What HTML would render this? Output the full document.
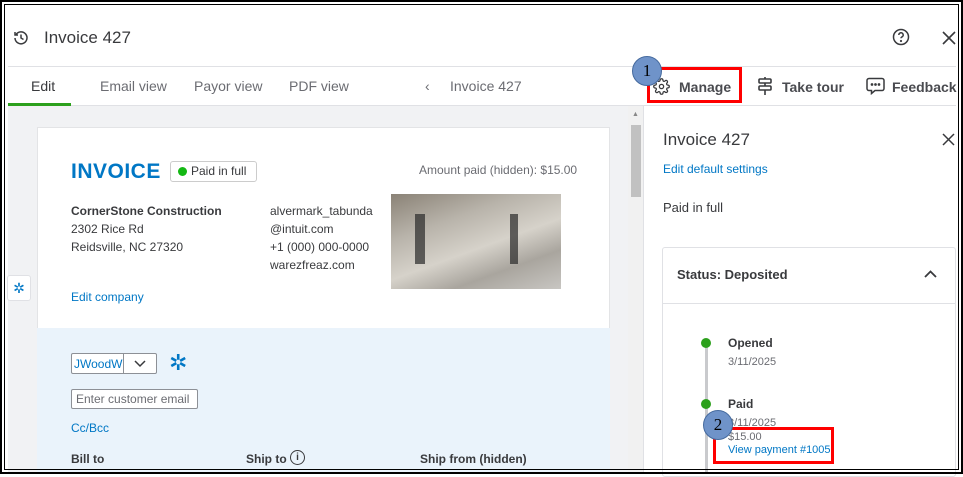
<!DOCTYPE html>
<html><head><style>
*{margin:0;padding:0;box-sizing:border-box}
body{width:963px;height:474px;overflow:hidden;background:#fff;font-family:"Liberation Sans",sans-serif;position:relative;color:#393a3d}
.a{position:absolute}
.frame{position:absolute;left:0;top:0;width:963px;height:474px;border:2px solid #000;pointer-events:none;z-index:10}
.frame2{position:absolute;left:4px;top:4px;width:955px;height:466px;border:1px solid #000;pointer-events:none;z-index:10}
.tab{position:absolute;top:78px;font-size:14px;color:#6b6c72}
.blue{color:#0077c5}
.s13{font-size:12px}
</style></head><body>
<div class="frame"></div><div class="frame2"></div>
<!-- header -->
<svg class="a" style="left:13px;top:30px" width="16" height="16" viewBox="0 0 16 16" fill="none" stroke="#393a3d" stroke-width="1.5"><path d="M3 4.5A6 6 0 1 1 2 8"/><path d="M2 2v3h3"/><path d="M8 4.5V8l2.5 1.5"/></svg>
<div class="a" style="left:44px;top:28px;font-size:17px;color:#393a3d">Invoice 427</div>
<svg class="a" style="left:892px;top:28px" width="18" height="18" viewBox="0 0 18 18" fill="none" stroke="#393a3d" stroke-width="1.5"><circle cx="9" cy="9" r="7.5"/><path d="M6.8 7a2.2 2.2 0 1 1 3 2c-.6.3-.8.7-.8 1.3"/><circle cx="9" cy="13" r=".4" fill="#393a3d"/></svg>
<svg class="a" style="left:942px;top:31px" width="14" height="14" viewBox="0 0 14 14" stroke="#393a3d" stroke-width="1.6"><path d="M1 1l12 12M13 1L1 13"/></svg>
<!-- tab bar -->
<div class="a" style="left:8px;top:66px;width:948px;height:1px;background:#e0e1e5"></div>
<div class="a" style="left:8px;top:105px;width:948px;height:1px;background:#e0e1e5"></div>
<div class="tab" style="left:31px;color:#393a3d">Edit</div>
<div class="a" style="left:8px;top:103px;width:63px;height:3px;background:#2ca01c"></div>
<div class="tab" style="left:100px">Email view</div>
<div class="tab" style="left:194px">Payor view</div>
<div class="tab" style="left:289px">PDF view</div>
<div class="tab" style="left:425px">‹</div>
<div class="tab" style="left:450px">Invoice 427</div>
<svg class="a" style="left:653px;top:78px" width="17" height="17" viewBox="0 0 24 24" fill="none" stroke="#393a3d" stroke-width="1.8"><circle cx="12" cy="12" r="3"/><path d="M19.4 15a1.7 1.7 0 0 0 .3 1.8l.1.1a2 2 0 1 1-2.8 2.8l-.1-.1a1.7 1.7 0 0 0-1.8-.3 1.7 1.7 0 0 0-1 1.5V21a2 2 0 1 1-4 0v-.1a1.7 1.7 0 0 0-1.1-1.5 1.7 1.7 0 0 0-1.8.3l-.1.1a2 2 0 1 1-2.8-2.8l.1-.1a1.7 1.7 0 0 0 .3-1.8 1.7 1.7 0 0 0-1.5-1H3a2 2 0 1 1 0-4h.1a1.7 1.7 0 0 0 1.5-1.1 1.7 1.7 0 0 0-.3-1.8l-.1-.1a2 2 0 1 1 2.8-2.8l.1.1a1.7 1.7 0 0 0 1.8.3H9a1.7 1.7 0 0 0 1-1.5V3a2 2 0 1 1 4 0v.1a1.7 1.7 0 0 0 1 1.5 1.7 1.7 0 0 0 1.8-.3l.1-.1a2 2 0 1 1 2.8 2.8l-.1.1a1.7 1.7 0 0 0-.3 1.8V9a1.7 1.7 0 0 0 1.5 1H21a2 2 0 1 1 0 4h-.1a1.7 1.7 0 0 0-1.5 1z"/></svg>
<div class="a" style="left:679px;top:79px;font-size:14px;font-weight:bold;color:#4a4b50">Manage</div>
<div class="a" style="left:647px;top:67px;width:95px;height:36px;border:3px solid #f00"></div>
<div class="a" style="left:632px;top:56px;width:30px;height:30px;border-radius:50%;background:#6f93c9;border:1px solid #456a9e;font-family:'Liberation Serif',serif;font-size:17px;color:#000;text-align:center;line-height:28px">1</div>
<svg class="a" style="left:757px;top:77px" width="16" height="18" viewBox="0 0 16 18" fill="none" stroke="#393a3d" stroke-width="1.6"><rect x="2" y="2" width="12" height="4" rx="1"/><rect x="2" y="9" width="12" height="4" rx="1"/><path d="M8 0v2M8 6v3M8 13v5"/></svg>
<div class="a" style="left:782px;top:79px;font-size:14px;font-weight:bold;color:#4a4b50">Take tour</div>
<svg class="a" style="left:866px;top:77px" width="19" height="18" viewBox="0 0 19 18" fill="none" stroke="#393a3d" stroke-width="1.5"><path d="M3 1.5h13a2 2 0 0 1 2 2v8a2 2 0 0 1-2 2H9l-3.5 3v-3H3a2 2 0 0 1-2-2v-8a2 2 0 0 1 2-2z"/><circle cx="6" cy="7.5" r=".6" fill="#393a3d"/><circle cx="9.5" cy="7.5" r=".6" fill="#393a3d"/><circle cx="13" cy="7.5" r=".6" fill="#393a3d"/></svg>
<div class="a" style="left:892px;top:79px;font-size:14px;font-weight:bold;color:#4a4b50">Feedback</div>
<!-- left gray area -->
<div class="a" style="left:8px;top:106px;width:620px;height:368px;background:#f1f2f4"></div>
<div class="a" style="left:7px;top:275px;width:24px;height:26px;background:#fff;border:1px solid #e0e1e5;border-radius:3px;color:#0077c5;font-size:14px;text-align:center;line-height:24px">✲</div>
<!-- scrollbar -->
<div class="a" style="left:628px;top:106px;width:15px;height:368px;background:#f1f1f1"></div>
<div class="a" style="left:631px;top:125px;width:10px;height:72px;background:#c1c1c1"></div>
<div class="a" style="left:632px;top:111px;font-size:7px;color:#888">▲</div>
<!-- invoice card -->
<div class="a" style="left:37px;top:127px;width:573px;height:347px;background:#fff;border:1px solid #e3e4e6"></div>
<div class="a" style="left:37px;top:328px;width:573px;height:146px;background:#eaf3fb"></div>
<div class="a blue" style="left:71px;top:160px;font-size:21px;font-weight:bold;letter-spacing:.5px">INVOICE</div>
<div class="a" style="left:170px;top:161px;width:87px;height:21px;border:1px solid #ccc;border-radius:3px;font-size:12px;color:#393a3d;line-height:19px;padding-left:20px">Paid in full</div>
<div class="a" style="left:178px;top:167px;width:9px;height:9px;border-radius:50%;background:#14b814"></div>
<div class="a" style="left:419px;top:163px;font-size:12px;color:#6b6c72">Amount paid (hidden): $15.00</div>
<div class="a s13" style="left:71px;top:202px;font-weight:bold;line-height:18px">CornerStone Construction<br><span style="font-weight:normal">2302 Rice Rd<br>Reidsville, NC 27320</span></div>
<div class="a s13" style="left:270px;top:202px;line-height:18px">alvermark_tabunda<br>@intuit.com<br>+1 (000) 000-0000<br>warezfreaz.com</div>
<div class="a" style="left:391px;top:194px;width:170px;height:95px;background:linear-gradient(160deg,#8a8276 0%,#b8b3aa 30%,#d6d2ca 55%,#a9a59e 75%,#c8c6c2 100%)"></div>
<div class="a" style="left:415px;top:214px;width:10px;height:50px;background:#2a2a2a;opacity:.7"></div>
<div class="a" style="left:510px;top:214px;width:8px;height:50px;background:#2a2a2a;opacity:.7"></div>
<div class="a blue s13" style="left:71px;top:290px">Edit company</div>
<div class="a" style="left:71px;top:353px;width:86px;height:21px;background:#fff;border:1px solid #8d9096;border-radius:2px"></div>
<div class="a blue s13" style="left:74px;top:357px">JWoodW</div>
<div class="a" style="left:123px;top:354px;width:1px;height:19px;background:#8d9096"></div>
<svg class="a" style="left:134px;top:360px" width="12" height="8" viewBox="0 0 12 8" fill="none" stroke="#393a3d" stroke-width="1.5"><path d="M1 1l5 5 5-5"/></svg>
<div class="a" style="left:169px;top:350px;font-size:22px;color:#0077c5">✲</div>
<div class="a" style="left:71px;top:389px;width:127px;height:20px;background:#fff;border:1px solid #8d9096;border-radius:2px;font-size:12px;color:#6b6c72;padding:2px 4px">Enter customer email</div>
<div class="a blue s13" style="left:71px;top:421px">Cc/Bcc</div>
<div class="a s13" style="left:71px;top:452px;font-weight:bold">Bill to</div>
<div class="a s13" style="left:246px;top:452px;font-weight:bold">Ship to</div>
<div class="a" style="left:290px;top:450px;width:15px;height:15px;border:1.3px solid #393a3d;border-radius:50%;font-size:10px;text-align:center;line-height:13px;font-weight:bold">i</div>
<div class="a s13" style="left:420px;top:452px;font-weight:bold">Ship from (hidden)</div>
<!-- right panel -->
<div class="a" style="left:643px;top:106px;width:1px;height:368px;background:#e0e1e5"></div>
<div class="a" style="left:663px;top:130px;font-size:17px;color:#393a3d">Invoice 427</div>
<svg class="a" style="left:942px;top:133px" width="13" height="13" viewBox="0 0 13 13" stroke="#393a3d" stroke-width="1.5"><path d="M1 1l11 11M12 1L1 12"/></svg>
<div class="a blue s13" style="left:663px;top:162px">Edit default settings</div>
<div class="a" style="left:663px;top:200px;font-size:13px">Paid in full</div>
<div class="a" style="left:662px;top:247px;width:294px;height:230px;border:1px solid #e0e1e5;border-radius:3px"></div>
<div class="a" style="left:663px;top:303px;width:293px;height:1px;background:#e0e1e5"></div>
<div class="a" style="left:677px;top:267px;font-size:13px;font-weight:bold">Status: Deposited</div>
<svg class="a" style="left:924px;top:270px" width="13" height="8" viewBox="0 0 13 8" fill="none" stroke="#393a3d" stroke-width="1.8"><path d="M1 7l5.5-5.5L12 7"/></svg>
<div class="a" style="left:705px;top:340px;width:3px;height:134px;background:#c9cacd"></div>
<div class="a" style="left:701px;top:338px;width:10px;height:10px;border-radius:50%;background:#2ca01c"></div>
<div class="a" style="left:701px;top:399px;width:10px;height:10px;border-radius:50%;background:#2ca01c"></div>
<div class="a" style="left:728px;top:336px;font-size:12px;font-weight:bold;color:#393a3d">Opened</div>
<div class="a" style="left:728px;top:356px;font-size:11px;color:#6b6c72">3/11/2025</div>
<div class="a" style="left:728px;top:397px;font-size:12px;font-weight:bold;color:#393a3d">Paid</div>
<div class="a" style="left:728px;top:417px;font-size:11px;color:#6b6c72">3/11/2025</div>
<div class="a" style="left:728px;top:431px;font-size:11px;color:#6b6c72">$15.00</div>
<div class="a blue" style="left:728px;top:444px;font-size:11px">View payment #1005</div>
<div class="a" style="left:713px;top:427px;width:121px;height:37px;border:3px solid #f00"></div>
<div class="a" style="left:703px;top:410px;width:30px;height:30px;border-radius:50%;background:#6f93c9;border:1px solid #456a9e;font-family:'Liberation Serif',serif;font-size:17px;color:#000;text-align:center;line-height:28px">2</div>
</body></html>
